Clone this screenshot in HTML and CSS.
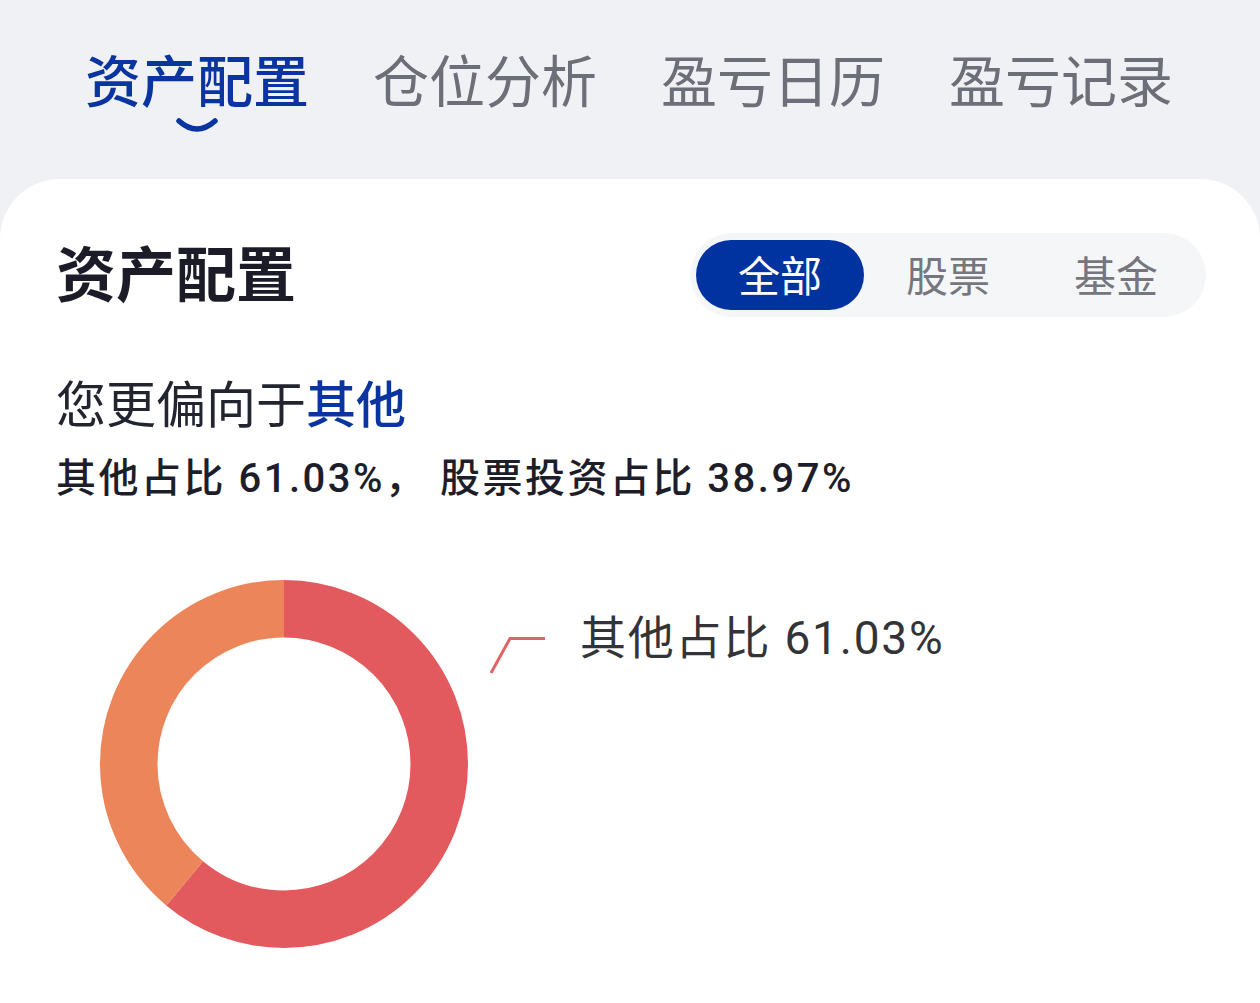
FILE: index.html
```html
<!DOCTYPE html>
<html lang="zh-CN">
<head>
<meta charset="utf-8">
<title>资产配置</title>
<link rel="stylesheet" href="styles.css">
</head>
<body>
<nav class="tabs">
  <div class="tab tab-active">资产配置
    <svg class="smile" width="44" height="18" viewBox="0 0 44 18"><path d="M4 4 Q22 20 40 4" fill="none" stroke="#0a35a0" stroke-width="5.5" stroke-linecap="round"/></svg>
  </div>
  <div class="tab">仓位分析</div>
  <div class="tab">盈亏日历</div>
  <div class="tab">盈亏记录</div>
</nav>
<main class="card">
  <div class="card-head">
    <h1 class="title">资产配置</h1>
    <div class="seg">
      <div class="seg-item seg-active">全部</div>
      <div class="seg-item">股票</div>
      <div class="seg-item">基金</div>
    </div>
  </div>
  <p class="prefer">您更偏向于<span class="hl">其他</span></p>
  <p class="detail">其他占比 61.03%， 股票投资占比 38.97%</p>
  <div class="chart">
    <svg class="donut" width="368" height="368" viewBox="0 0 368 368">
      <g transform="rotate(-90 184 184)">
        <circle cx="184" cy="184" r="155.25" fill="none" stroke="#e35a5e" stroke-width="57.5" stroke-dasharray="595.3 975.46"/>
        <circle cx="184" cy="184" r="155.25" fill="none" stroke="#ec8559" stroke-width="57.5" stroke-dasharray="380.16 975.46" stroke-dashoffset="-595.3"/>
      </g>
    </svg>
    <svg class="leader" width="60" height="40" viewBox="0 0 60 40"><path d="M3 37 L22 2.5 L57 2.5" fill="none" stroke="#e06466" stroke-width="3"/></svg>
    <div class="legend">其他占比 61.03%</div>
  </div>
</main>
</body>
</html>
```

FILE: styles.css
```css
* { box-sizing: border-box; }
html, body { margin: 0; padding: 0; }
body {
  background: #f0f1f5;
  font-family: Roboto, "Noto Sans CJK SC", sans-serif;
  width: 1260px;
  height: 1003px;
  overflow: hidden;
}
.tabs {
  display: flex;
  gap: 64px;
  padding: 50px 0 0 85px;
  height: 179px;
}
.tab {
  position: relative;
  font-family: "Noto Sans CJK SC", sans-serif;
  font-size: 56px;
  line-height: 56px;
  color: #6c6e78;
  white-space: nowrap;
}
.tab-active { color: #0a35a0; font-weight: 500; }
.smile {
  position: absolute;
  left: 90px;
  top: 67px;
}
.card {
  background: #fff;
  border-radius: 60px 60px 0 0;
  height: 824px;
  padding: 54px 54px 0 56px;
}
.card-head {
  display: flex;
  justify-content: space-between;
  align-items: center;
}
.title {
  margin: 0 0 9px;
  font-family: "Noto Sans CJK SC", sans-serif;
  font-size: 60px;
  line-height: 64px;
  font-weight: 700;
  color: #1b1c28;
}
.seg {
  display: flex;
  background: #f5f6f8;
  border-radius: 42px;
  padding: 7px 6px;
  width: 516px;
  height: 84px;
}
.seg-item {
  width: 168px;
  height: 70px;
  border-radius: 35px;
  display: flex;
  align-items: center;
  justify-content: center;
  padding-bottom: 4px;
  font-family: "Noto Sans CJK SC", sans-serif;
  font-size: 42px;
  color: #75767e;
}
.seg-active { background: #0033a0; color: #fff; }
.prefer {
  margin: 57px 0 0;
  font-family: "Noto Sans CJK SC", sans-serif;
  font-size: 50px;
  line-height: 54px;
  color: #222430;
}
.hl { color: #0a35a0; font-weight: 500; }
.detail {
  margin: 29px 0 0;
  font-size: 40px;
  line-height: 44px;
  font-weight: 500;
  letter-spacing: 2.5px;
  color: #1d1e2a;
}
.chart {
  display: flex;
  align-items: flex-start;
  margin-top: 79px;
  padding-left: 44px;
}
.donut { display: block; flex: none; }
.leader { display: block; flex: none; margin: 56px 0 0 20px; }
.legend {
  margin: 33px 0 0 32px;
  font-size: 46px;
  line-height: 50px;
  letter-spacing: 1.8px;
  color: #333438;
  white-space: nowrap;
}
```
